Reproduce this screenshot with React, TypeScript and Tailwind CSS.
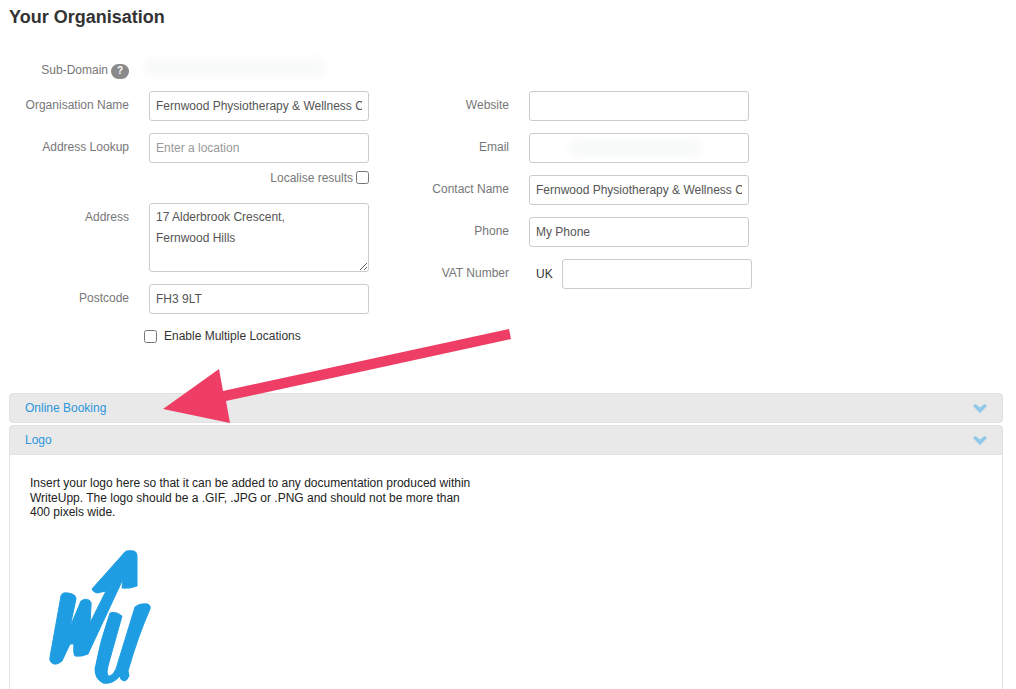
import React from 'react';

const inputClass =
  'h-[30px] w-[220px] rounded-[3px] border border-[#ccc] bg-white px-[6px] text-xs text-[#555] outline-none placeholder:text-[#999]';

function Label({ children }: { children: React.ReactNode }) {
  return <label className="block pt-[7px] text-right text-xs leading-[14px] text-[#777]">{children}</label>;
}

function Chevron() {
  return (
    <svg width="14" height="9" viewBox="0 0 14 9" className="mr-[15px]">
      <polygon points="0,2 2.5,0 7,3.5 11.5,0 14,2 7,9" fill="#8ec9e9" />
    </svg>
  );
}

function PanelHeader({ title, rounded }: { title: string; rounded: string }) {
  return (
    <div className={`flex h-[30px] items-center justify-between border border-[#e2e2e2] bg-[#e9e9e9] pl-[15px] ${rounded}`}>
      <span className="text-xs text-[#2b96dc]">{title}</span>
      <Chevron />
    </div>
  );
}

function Blurred({ className }: { className: string }) {
  return <div className={`bg-[#eef1f3] blur-[5px] ${className}`} />;
}

export default function App() {
  return (
    <div className="relative h-[689px] overflow-hidden bg-white font-['Liberation_Sans',Arial,sans-serif]">
      <h1 className="pl-[9px] pt-[7px] text-[18px] font-bold leading-[20px] text-[#333]">Your Organisation</h1>

      <div className="mt-[27px] flex">
        {/* Left column */}
        <div className="w-[369px]">
          <div className="flex h-[26px] items-center">
            <div className="flex w-[129px] items-center justify-end gap-[3px] pt-[6px] text-xs text-[#777]">
              Sub-Domain
              <span className="mt-[2px] flex h-[15px] w-[18px] items-center justify-center rounded-full bg-[#8a8a8a] text-[10px] font-bold text-white">
                ?
              </span>
            </div>
            <Blurred className="ml-[16px] h-[18px] w-[180px] opacity-40" />
          </div>

          <div className="mt-[11px] grid grid-cols-[129px_220px] items-start gap-x-5">
            <Label>Organisation Name</Label>
            <input className={inputClass} readOnly defaultValue="Fernwood Physiotherapy & Wellness Clinic" />
          </div>

          <div className="mt-3 grid grid-cols-[129px_220px] items-start gap-x-5">
            <Label>Address Lookup</Label>
            <input className={inputClass} placeholder="Enter a location" />
          </div>

          <div className="mt-[7px] flex h-[15px] items-center justify-end gap-[3px] text-xs text-[#777]">
            Localise results
            <input type="checkbox" className="m-0 h-[13px] w-[13px]" />
          </div>

          <div className="mt-[18px] grid grid-cols-[129px_220px] items-start gap-x-5">
            <Label>Address</Label>
            <textarea
              className="block h-[69px] w-[220px] rounded-[3px] border border-[#ccc] bg-white px-[6px] py-[3px] text-xs leading-[21px] text-[#555] outline-none"
              readOnly
              defaultValue={'17 Alderbrook Crescent,\nFernwood Hills'}
            />
          </div>

          <div className="mt-3 grid grid-cols-[129px_220px] items-start gap-x-5">
            <Label>Postcode</Label>
            <input className={inputClass} readOnly defaultValue="FH3 9LT" />
          </div>

          <div className="ml-[144px] mt-[15px] flex h-[14px] items-center gap-[7px] text-xs text-[#333]">
            <input type="checkbox" className="m-0 h-[13px] w-[13px]" />
            Enable Multiple Locations
          </div>
        </div>

        {/* Right column */}
        <div className="flex flex-col gap-3 pt-[37px]">
          <div className="grid grid-cols-[140px_220px] items-start gap-x-5">
            <Label>Website</Label>
            <input className={inputClass} readOnly />
          </div>
          <div className="grid grid-cols-[140px_220px] items-start gap-x-5">
            <Label>Email</Label>
            <div className="flex h-[30px] w-[220px] items-center overflow-hidden rounded-[3px] border border-[#ccc] bg-white px-[6px]">
              <Blurred className="ml-[34px] h-[12px] w-[130px] opacity-60" />
            </div>
          </div>
          <div className="grid grid-cols-[140px_220px] items-start gap-x-5">
            <Label>Contact Name</Label>
            <input className={inputClass} readOnly defaultValue="Fernwood Physiotherapy & Wellness Clinic" />
          </div>
          <div className="grid grid-cols-[140px_220px] items-start gap-x-5">
            <Label>Phone</Label>
            <input className={inputClass} readOnly defaultValue="My Phone" />
          </div>
          <div className="grid grid-cols-[140px_auto] items-start gap-x-5">
            <Label>VAT Number</Label>
            <div className="ml-[7px] flex items-center gap-[9px] text-xs text-[#333]">
              UK
              <input className="h-[30px] w-[190px] rounded-[3px] border border-[#ccc] bg-white px-[6px] text-xs outline-none" readOnly />
            </div>
          </div>
        </div>
      </div>

      {/* Panels */}
      <div className="mx-[13px] ml-[9px] mt-[50px] flex flex-col gap-[2px]">
        <PanelHeader title="Online Booking" rounded="rounded-[4px]" />
        <div>
          <PanelHeader title="Logo" rounded="rounded-t-[4px]" />
          <div className="h-[300px] border-x border-[#e2e2e2] bg-white pl-5 pt-[21px]">
            <p className="text-xs leading-[14.5px] text-[#222]">
              Insert your logo here so that it can be added to any documentation produced within
              <br />
              WriteUpp. The logo should be a .GIF, .JPG or .PNG and should not be more than
              <br />
              400 pixels wide.
            </p>
            <svg width="110" height="140" viewBox="45 545 110 140" className="ml-[15px] mt-[26px]">
              <path
                fill="#1f9de3"
                stroke="#1f9de3"
                strokeWidth="1"
                strokeLinejoin="round"
                d="M50 656 L61 595 Q62 591 68 592 Q76 593 76 598 L70 626 L81 600 Q84 597 89 599 Q92 601 91 605 L90 622 L106 590 L97 592 Q93 591 92 588 L125 551 Q127 549 134 550 Q137 551 137 555 L137 585 Q130 588 122 587 L123 578 L88 653 Q82 656 75 655 Q73 652 74 643 L70 643 L62 660 Q56 665 52 662 Q49 660 50 656 Z"
              />
              <path
                fill="#1f9de3"
                stroke="#1f9de3"
                strokeWidth="1"
                strokeLinejoin="round"
                d="M110 612 Q116 610 122 615 L108 665 Q106 672 108 675 Q112 676 116 668 L135 606 Q140 602 148 603 Q151 605 150 608 Q138 635 128 670 L129 675 Q127 680 124 680 Q120 679 120 675 Q112 684 103 682 Q95 678 95 668 Q100 640 110 612 Z"
              />
            </svg>
          </div>
        </div>
      </div>

      {/* Annotation arrow */}
      <svg className="pointer-events-none absolute left-0 top-0" width="1016" height="689">
        <polygon points="163,409 219,369 223,391 509,329 511,339 226,401 230,423" fill="#ef3e66" />
      </svg>
    </div>
  );
}
